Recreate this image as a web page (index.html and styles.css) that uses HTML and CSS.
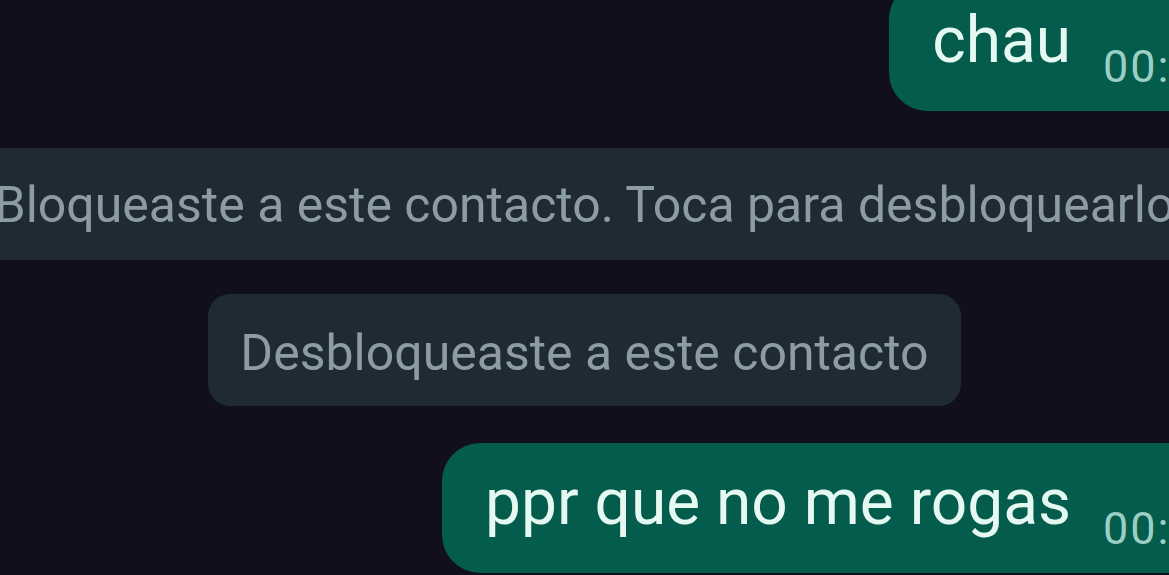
FILE: index.html
```html
<!DOCTYPE html>
<html lang="es">

<head>
  <meta charset="UTF-8">
  <meta name="viewport" content="width=device-width, initial-scale=1.0">
  <title>Chat</title>
  <link rel="stylesheet" href="styles.css">
</head>

<body>
  <div class="chat">
    <div class="bubble out">
      <span class="msg">chau</span>
      <span class="time">00:02</span>
    </div>

    <div class="notice wide">Bloqueaste a este contacto. Toca para desbloquearlo</div>

    <div class="notice pill">Desbloqueaste a este contacto</div>

    <div class="bubble out">
      <span class="msg">ppr que no me rogas</span>
      <span class="time">00:02</span>
    </div>
  </div>
</body>

</html>
```

FILE: styles.css
```css
body {
  margin: 0;
  height: 100vh;
  overflow: hidden;
  background: #110f1b;
  font-family: Roboto, 'Noto Sans', sans-serif;
}

.chat {
  display: flex;
  flex-direction: column;
  margin-top: -19px;
}

.bubble {
  align-self: flex-end;
  margin-right: -96px;
  height: 130px;
  box-sizing: border-box;
  padding: 28px 40px 0 43px;
  background: #035c4c;
  border-radius: 38px;
  white-space: nowrap;
}

.bubble + .notice {
  margin-top: 37px;
}

.msg {
  font-size: 64px;
  line-height: 64px;
  color: #e6f8f2;
}

.time {
  margin-left: 28px;
  font-size: 45px;
  letter-spacing: 2px;
  color: #9ccfc3;
  vertical-align: -20px;
}

.notice {
  box-sizing: border-box;
  height: 112px;
  font-size: 50px;
  line-height: 50px;
  color: #8b9ca6;
  background: #1f2a33;
  white-space: nowrap;
  text-align: center;
}

.wide {
  margin: 0 -80px;
  padding-top: 32px;
  border-radius: 22px;
}

.pill {
  align-self: center;
  margin: 34px 0 37px;
  padding: 34px 32px 0;
  border-radius: 22px;
}
```
